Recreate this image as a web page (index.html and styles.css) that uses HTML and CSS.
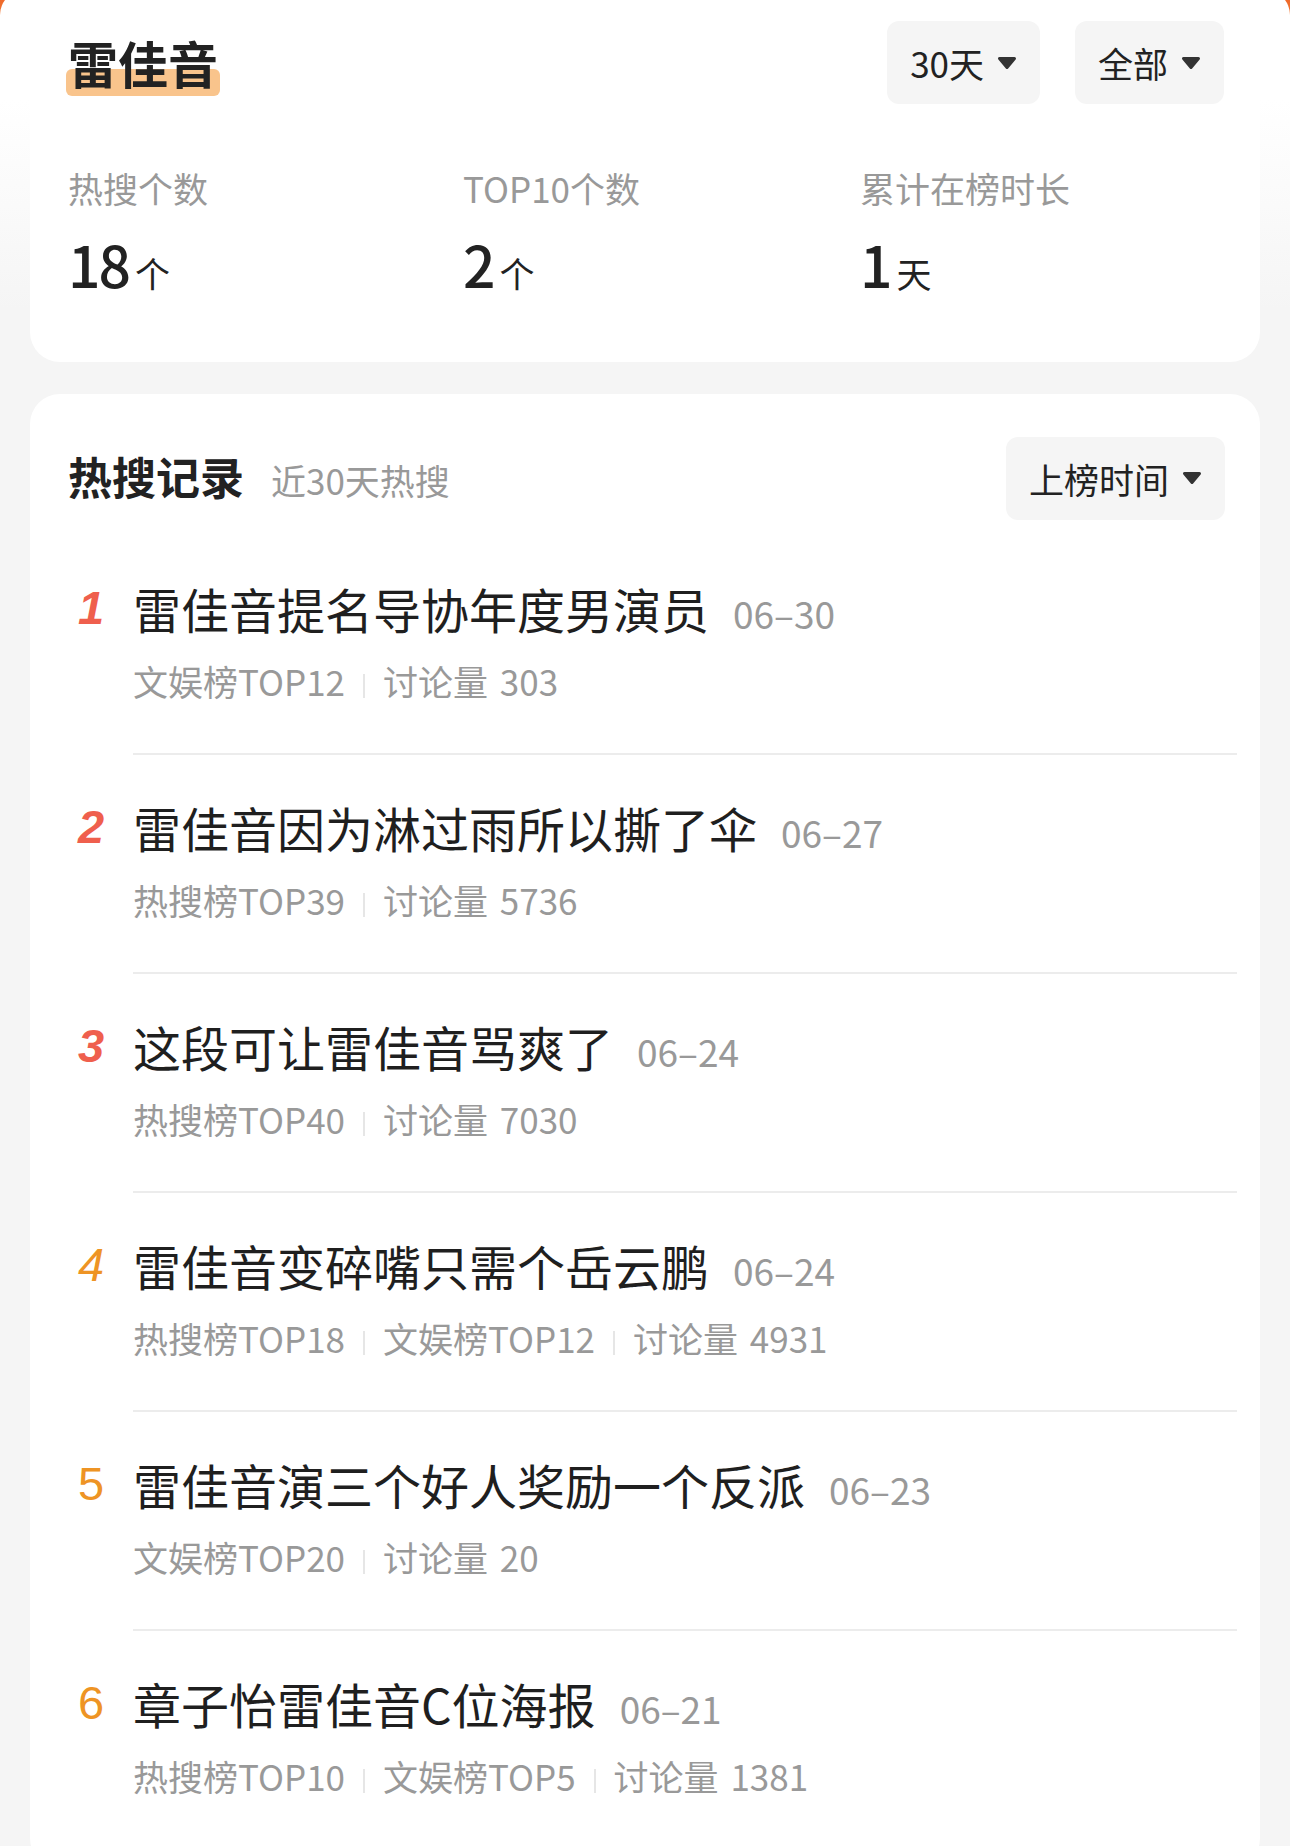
FILE: index.html
```html
<!doctype html>
<html>
    <head>
        <meta charset="UTF-8"/>
        <title>雷佳音 热搜记录</title>
        <link rel="stylesheet" href="styles.css">
    </head>
    <body>
    <div class="page">
        <section class="card summary">
            <div class="summary-head">
                <h1 class="name"><span>雷佳音</span></h1>
                <div class="filters">
                    <div class="select">30天<svg class="caret" width="20" height="14" viewBox="0 0 20 14"><path d="M2.5 2.5H17.5L10 11.5Z"/></svg></div>
                    <div class="select">全部<svg class="caret" width="20" height="14" viewBox="0 0 20 14"><path d="M2.5 2.5H17.5L10 11.5Z"/></svg></div>
                </div>
            </div>
            <div class="stats">
                <div class="stat">
                    <p class="stat-label">热搜个数</p>
                    <p class="stat-value">18<em>个</em></p>
                </div>
                <div class="stat">
                    <p class="stat-label">TOP10个数</p>
                    <p class="stat-value">2<em>个</em></p>
                </div>
                <div class="stat">
                    <p class="stat-label">累计在榜时长</p>
                    <p class="stat-value">1<em>天</em></p>
                </div>
            </div>
        </section>

        <section class="card records">
            <div class="records-head">
                <h2>热搜记录<small>近30天热搜</small></h2>
                <div class="select">上榜时间<svg class="caret" width="20" height="14" viewBox="0 0 20 14"><path d="M2.5 2.5H17.5L10 11.5Z"/></svg></div>
            </div>
            <ul class="record-list">
                <li class="record">
                    <span class="rank hot">1</span>
                    <div class="record-body">
                        <p class="record-title">雷佳音提名导协年度男演员<span class="date">06–30</span></p>
                        <p class="record-meta"><span>文娱榜TOP12</span><span>讨论量 303</span></p>
                    </div>
                </li>
                <li class="record">
                    <span class="rank hot">2</span>
                    <div class="record-body">
                        <p class="record-title">雷佳音因为淋过雨所以撕了伞<span class="date">06–27</span></p>
                        <p class="record-meta"><span>热搜榜TOP39</span><span>讨论量 5736</span></p>
                    </div>
                </li>
                <li class="record">
                    <span class="rank hot">3</span>
                    <div class="record-body">
                        <p class="record-title">这段可让雷佳音骂爽了<span class="date">06–24</span></p>
                        <p class="record-meta"><span>热搜榜TOP40</span><span>讨论量 7030</span></p>
                    </div>
                </li>
                <li class="record">
                    <span class="rank warm slant">4</span>
                    <div class="record-body">
                        <p class="record-title">雷佳音变碎嘴只需个岳云鹏<span class="date">06–24</span></p>
                        <p class="record-meta"><span>热搜榜TOP18</span><span>文娱榜TOP12</span><span>讨论量 4931</span></p>
                    </div>
                </li>
                <li class="record">
                    <span class="rank warm">5</span>
                    <div class="record-body">
                        <p class="record-title">雷佳音演三个好人奖励一个反派<span class="date">06–23</span></p>
                        <p class="record-meta"><span>文娱榜TOP20</span><span>讨论量 20</span></p>
                    </div>
                </li>
                <li class="record">
                    <span class="rank warm">6</span>
                    <div class="record-body">
                        <p class="record-title">章子怡雷佳音C位海报<span class="date">06–21</span></p>
                        <p class="record-meta"><span>热搜榜TOP10</span><span>文娱榜TOP5</span><span>讨论量 1381</span></p>
                    </div>
                </li>
            </ul>
        </section>
    </div>
    </body>
</html>
```

FILE: styles.css
```css
* {
    margin: 0;
    padding: 0;
    box-sizing: border-box;
}
body {
    font-family: "Noto Sans CJK SC", "Noto Sans", sans-serif;
    color: #222;
    background: linear-gradient(#ef6a2b 0, #f08a3a 40px, #f5f5f5 40px);
}
.page {
    margin-top: -10px;
    min-height: 1900px;
    padding: 0 30px 40px;
    border-radius: 25px 25px 0 0;
    background: linear-gradient(#fff 110px, #f5f5f5 320px);
}
.card {
    background: #fff;
    border-radius: 30px;
}

/* 顶部概览 */
.summary {
    padding: 31px 36px 64px 38px;
}
.summary-head {
    display: flex;
    justify-content: space-between;
    align-items: center;
    height: 83px;
}
.name {
    font-size: 50px;
    font-weight: bold;
    line-height: 83px;
}
.name span {
    position: relative;
    z-index: 0;
}
.name span::before {/*名字下的高亮条*/
    content: "";
    position: absolute;
    z-index: -1;
    left: -2px;
    right: -2px;
    bottom: 2px;
    height: 27px;
    border-radius: 6px;
    background: #f9c48c;
}
.filters {
    display: flex;
    gap: 35px;
}
.select {
    display: flex;
    align-items: center;
    gap: 13px;
    height: 83px;
    padding: 0 23px;
    border-radius: 12px;
    background: #f5f5f5;
    font-size: 35px;
    color: #222;
}
.caret {
    display: block;
}
.caret path {
    fill: #333;
    stroke: #333;
    stroke-width: 3;
    stroke-linejoin: round;
}
.stats {
    display: grid;
    grid-template-columns: 395px 397px 1fr;
    margin-top: 60px;
}
.stat-label {
    font-size: 35px;
    line-height: 48px;
    color: #999;
}
.stat-value {
    margin-top: 16px;
    font-size: 57px;
    line-height: 70px;
    font-weight: 500;
    letter-spacing: -2px;
    color: #222;
}
.stat-value em {
    font-style: normal;
    font-weight: normal;
    font-size: 35px;
    line-height: 1;
    letter-spacing: 0;
    margin-left: 6px;
}

/* 热搜记录 */
.records {
    margin-top: 32px;
    padding: 41px 23px 20px 38px;
}
.records-head {
    display: flex;
    justify-content: space-between;
    align-items: center;
    padding-right: 12px;
    margin-bottom: 15px;
}
.records-head h2 {
    font-size: 44px;
    font-weight: bold;
    line-height: 83px;
}
.records-head small {
    font-size: 35px;
    font-weight: normal;
    color: #999;
    margin-left: 27px;
}
.record-list {
    list-style: none;
}
.record {
    display: flex;
}
.rank {
    width: 46px;
    margin-right: 19px;
    padding-top: 40px;
    text-align: center;
    font-size: 47px;
    line-height: 64px;
    font-family: "Liberation Sans", "Noto Sans", sans-serif;
}
.rank.hot {
    color: #ef5f4d;
    font-weight: bold;
    font-style: italic;
}
.rank.warm {
    color: #ee9424;
}
.rank.slant {
    font-style: italic;
}
.record-body {
    flex: 1;
    padding: 40px 0 48px;
    border-bottom: 2px solid #ececec;
}
.record:last-child .record-body {
    border-bottom: none;
}
.record-title {
    font-size: 48px;
    line-height: 64px;
    color: #1f1f1f;
}
.date {
    font-size: 37px;
    line-height: 1;
    color: #999;
    margin-left: 24px;
}
.record-meta {
    margin-top: 17px;
    font-size: 35px;
    line-height: 48px;
    color: #999;
    word-spacing: 4px;
}
.record-meta span + span::before {
    content: "";
    display: inline-block;
    width: 2px;
    height: 24px;
    margin: 0 18px;
    background: #e6e6e6;
    vertical-align: -2px;
}
```
